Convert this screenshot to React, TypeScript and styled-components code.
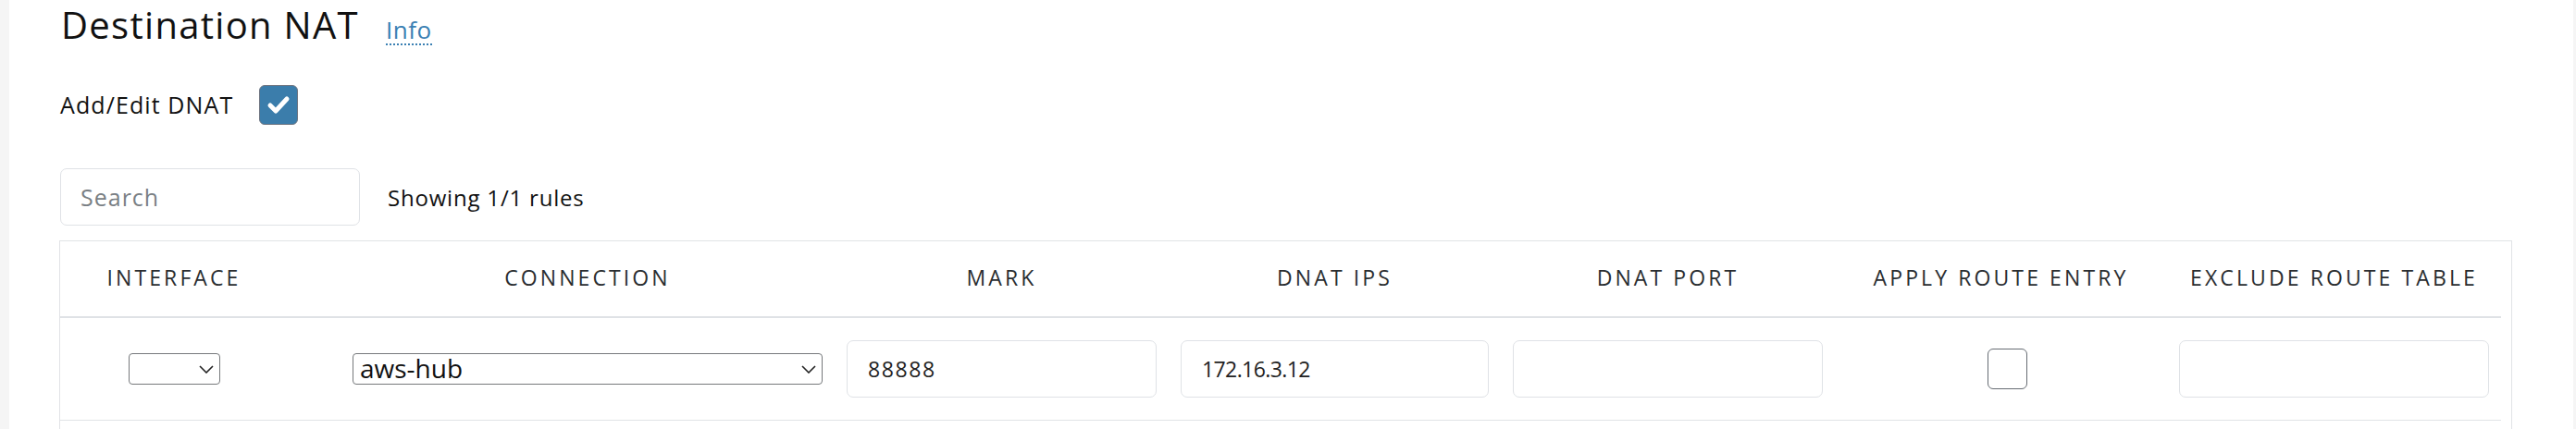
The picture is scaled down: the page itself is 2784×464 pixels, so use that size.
import React from "react";
import styled, { createGlobalStyle } from "styled-components";

const GlobalStyle = createGlobalStyle`
  html, body { margin: 0; padding: 0; background: #f5f5f5; }
  body { font-family: "Open Sans", "Liberation Sans", sans-serif; color: #212529; }
  * { box-sizing: border-box; }
`;

const Page = styled.div`
  padding: 0 3px 0 10px;
  min-height: 464px;
`;

const Card = styled.main`
  background: #ffffff;
  min-height: 464px;
  padding: 3px 66px 0 54px;
`;

const TitleRow = styled.div`
  display: flex;
  align-items: baseline;
  gap: 29px;
  height: 53px;
  padding-left: 2px;
`;

const Title = styled.h2`
  margin: 0;
  font-size: 40px;
  line-height: 48px;
  font-weight: 400;
  letter-spacing: 1.3px;
  color: #111;
`;

const InfoLink = styled.a`
  font-size: 26px;
  font-weight: 400;
  letter-spacing: 0.5px;
  color: #3a80b3;
  text-decoration: none;
  border-bottom: 2px dotted #3a80b3;
  line-height: 30px;
`;

const OptionRow = styled.div`
  display: flex;
  align-items: center;
  gap: 28px;
  margin-top: 35px;
  height: 44px;
  padding-left: 1px;
`;

const OptionLabel = styled.span`
  font-size: 25px;
  font-weight: 400;
  letter-spacing: 1.1px;
  color: #111;
`;

const CheckBox = styled.span<{ $checked?: boolean; $w: number; $h: number }>`
  display: inline-flex;
  align-items: center;
  justify-content: center;
  width: ${(p) => p.$w}px;
  height: ${(p) => p.$h}px;
  border-radius: 6px;
  border: 1.5px solid ${(p) => (p.$checked ? "#6d7480" : "#666c73")};
  background: ${(p) => (p.$checked ? "#3b7dab" : "#ffffff")};
`;

const Toolbar = styled.div`
  display: flex;
  align-items: center;
  gap: 30px;
  margin-top: 47px;
  padding-left: 1px;
`;

const SearchInput = styled.input`
  width: 324px;
  height: 62px;
  border: 1px solid #dfe2e6;
  border-radius: 7px;
  padding: 0 0 0 21px;
  font-family: "Open Sans", "Liberation Sans", sans-serif;
  font-size: 25px;
  letter-spacing: 1px;
  color: #212529;
  outline: none;
  &::placeholder { color: #7a7f84; }
`;

const Counter = styled.span`
  font-size: 24px;
  letter-spacing: 0.8px;
  color: #111;
`;

const TableBox = styled.div`
  margin-top: 16px;
  border: 1px solid #e1e3e6;
  border-bottom: none;
  padding: 0 11px 40px 0;
`;

const Grid = styled.div<{ $head?: boolean }>`
  display: grid;
  grid-template-columns: 246px 591px 361px 359px 361px 359px 361px;
  height: ${(p) => (p.$head ? 83 : 111)}px;
  border-bottom: ${(p) => (p.$head ? "2px solid #dfe2e6" : "1px solid #e1e3e6")};
`;

const HeadCell = styled.div<{ $pl?: number; $pr?: number }>`
  display: flex;
  align-items: center;
  justify-content: center;
  padding: 0 ${(p) => p.$pr ?? 13}px 4px ${(p) => p.$pl ?? 13}px;
  font-size: 23px;
  font-weight: 400;
  letter-spacing: 3.1px;
  color: #2a2d30;
  text-transform: uppercase;
  white-space: nowrap;
`;

const Cell = styled.div<{ $align?: string; $pl?: number; $pr?: number }>`
  display: flex;
  align-items: center;
  justify-content: ${(p) => p.$align ?? "center"};
  padding: 0 ${(p) => p.$pr ?? 13}px 0 ${(p) => p.$pl ?? 13}px;
`;

const SelectWrap = styled.span<{ $w: number }>`
  position: relative;
  display: inline-block;
  width: ${(p) => p.$w}px;
  height: 34px;
`;

const NativeSelect = styled.select`
  appearance: none;
  width: 100%;
  height: 100%;
  border: 1px solid #76797c;
  border-radius: 4px;
  background: #ffffff;
  padding: 0 30px 2px 7px;
  font-family: "Open Sans", "Liberation Sans", sans-serif;
  font-size: 28px;
  line-height: 30px;
  color: #111;
  outline: none;
`;

const Chevron = styled.svg`
  position: absolute;
  right: 7px;
  top: 13px;
  pointer-events: none;
`;

const TextInput = styled.input<{ $tracking?: number }>`
  width: 335px;
  height: 62px;
  border: 1px solid #dfe2e6;
  border-radius: 7px;
  padding: 0 0 0 22px;
  font-family: "Open Sans", "Liberation Sans", sans-serif;
  font-size: 23px;
  letter-spacing: ${(p) => p.$tracking ?? 1.6}px;
  color: #222;
  outline: none;
`;

const headers: { label: string; pl?: number; pr?: number }[] = [
  { label: "Interface" },
  { label: "Connection", pl: 70, pr: 13 },
  { label: "Mark" },
  { label: "DNAT IPs" },
  { label: "DNAT Port" },
  { label: "Apply Route Entry" },
  { label: "Exclude Route Table" },
];

function Select({ width, value }: { width: number; value: string }) {
  return (
    <SelectWrap $w={width}>
      <NativeSelect defaultValue={value}>
        <option value={value}>{value}</option>
      </NativeSelect>
      <Chevron width="16" height="9" viewBox="0 0 16 9">
        <polyline points="1,1 8,8 15,1" fill="none" stroke="#222" strokeWidth="1.6" />
      </Chevron>
    </SelectWrap>
  );
}

export default function App() {
  return (
    <>
      <GlobalStyle />
      <Page>
        <Card>
          <TitleRow>
            <Title>Destination NAT</Title>
            <InfoLink href="#">Info</InfoLink>
          </TitleRow>
          <OptionRow>
            <OptionLabel>Add/Edit DNAT</OptionLabel>
            <CheckBox $checked $w={42} $h={43}>
              <svg width="26" height="22" viewBox="0 0 26 22">
                <polyline
                  points="4,12 10,18 22,5"
                  fill="none"
                  stroke="#ffffff"
                  strokeWidth="5"
                  strokeLinecap="round"
                  strokeLinejoin="round"
                />
              </svg>
            </CheckBox>
          </OptionRow>
          <Toolbar>
            <SearchInput placeholder="Search" />
            <Counter>Showing 1/1 rules</Counter>
          </Toolbar>
          <TableBox>
            <Grid $head>
              {headers.map((h) => (
                <HeadCell key={h.label} $pl={h.pl} $pr={h.pr}>
                  {h.label}
                </HeadCell>
              ))}
            </Grid>
            <Grid>
              <Cell>
                <Select width={99} value="" />
              </Cell>
              <Cell $align="flex-start" $pl={70}>
                <Select width={508} value="aws-hub" />
              </Cell>
              <Cell>
                <TextInput defaultValue="88888" />
              </Cell>
              <Cell>
                <TextInput defaultValue="172.16.3.12" $tracking={-0.6} />
              </Cell>
              <Cell>
                <TextInput defaultValue="" />
              </Cell>
              <Cell $pl={27}>
                <CheckBox $w={43} $h={44} />
              </Cell>
              <Cell>
                <TextInput defaultValue="" />
              </Cell>
            </Grid>
          </TableBox>
        </Card>
      </Page>
    </>
  );
}
